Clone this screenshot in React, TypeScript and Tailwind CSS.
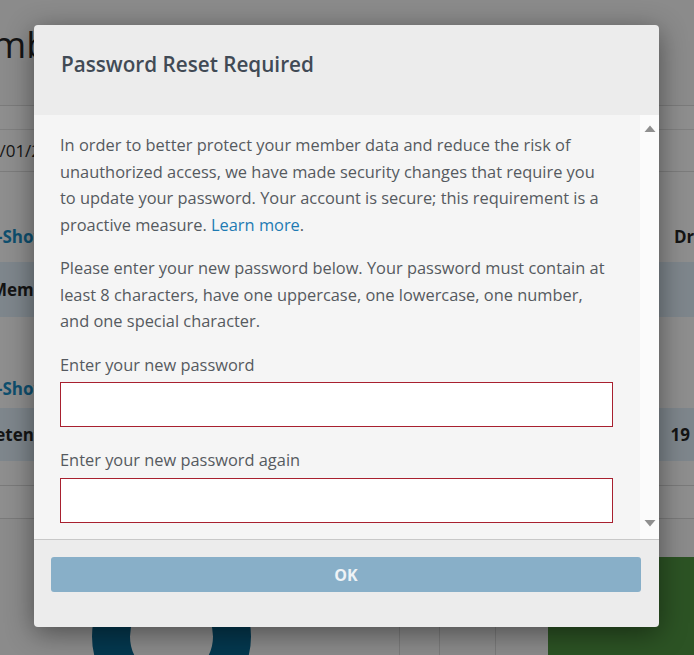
import React from "react";

const Arrow = ({ down }: { down?: boolean }) => (
  <svg width="12" height="8" viewBox="0 0 12 8" className="block">
    {down ? (
      <path d="M0.5 1 H11.5 L6 7.5 Z" fill="#8f8f8f" />
    ) : (
      <path d="M0.5 7 H11.5 L6 0.5 Z" fill="#8f8f8f" />
    )}
  </svg>
);

// the page behind the modal, already dimmed by the backdrop
function Backdrop() {
  return (
    <div className="flex flex-col h-full text-[#141414]">
      <div className="h-[105px] shrink-0 flex items-start">
        <h1 className="-ml-[62px] mt-[22px] text-[37px] leading-[44px] font-normal whitespace-nowrap">
          Membership
        </h1>
      </div>
      <div className="shrink-0 border-t border-[#7b7b7b] bg-[#8e8e8e]">
        <div className="h-[24px] border-b border-[#7f7f7f]" />
        <div className="h-[42px] border-b border-[#7c7c7c] flex items-center">
          <span className="-ml-[20px] text-[17px]">01/01/2019</span>
        </div>
        <div className="h-[46px]" />
        <div className="h-[38px] flex items-center justify-between font-bold text-[17px]">
          <span className="-ml-[3px] text-[#0e4f6e]">-Show</span>
          <span className="-mr-[30px]">Drops</span>
        </div>
        <div className="h-[6px]" />
        <div className="h-[55px] bg-[#7e868c] flex items-center font-bold text-[17px]">
          <span className="-ml-[9px]">Member</span>
        </div>
        <div className="h-[53px]" />
        <div className="h-[38px] flex items-center font-bold text-[17px]">
          <span className="-ml-[3px] text-[#0e4f6e]">-Show</span>
        </div>
        <div className="h-[53px] bg-[#7e868c] flex items-center justify-between font-bold text-[17px]">
          <span className="-ml-[16px]">Retention</span>
          <span className="mr-[4px]">19</span>
        </div>
        <div className="h-[25px] border-b border-[#7a7a7a]" />
        <div className="h-[33px] border-b border-[#7a7a7a]" />
      </div>
      <div className="flex flex-1 shrink-0 mt-[38px]">
        <div className="w-[400px] border-r border-[#7a7a7a]">
          <div className="ml-[92px] w-[159px] h-[159px] rounded-full border-[38px] border-[#04384f]" />
        </div>
        <div className="w-[40px] border-r border-[#7a7a7a]" />
        <div className="w-[56px] border-r border-[#7a7a7a]" />
        <div className="w-[52px]" />
        <div className="flex-1 bg-[#2c5324]" />
      </div>
    </div>
  );
}

export default function App() {
  return (
    <div className="relative w-[694px] h-[655px] overflow-hidden bg-[#8b8b8b] font-['Open_Sans',sans-serif]">
      <Backdrop />
      <div className="absolute left-[34px] top-[25px] w-[625px] h-[602px] rounded-[4px] bg-[#ececec] shadow-[0_6px_28px_rgba(0,0,0,0.45)] flex flex-col overflow-hidden">
        <div className="h-[90px] pt-[24px] px-[27px] shrink-0">
          <h2 className="text-[20.7px] leading-[30px] font-semibold text-[#414a55]">
            Password Reset Required
          </h2>
        </div>
        <div className="h-[425px] flex bg-[#f5f5f5] border-b border-[#c8c8c8] shrink-0">
          <div className="flex-1 overflow-hidden pl-[26px] pr-[27px] pt-[17px] text-[16.4px] leading-[26.5px] text-[#555a60] whitespace-nowrap">
            <p className="mb-[17px]">
              In order to better protect your member data and reduce the risk of
              <br />
              unauthorized access, we have made security changes that require you
              <br />
              to update your password. Your account is secure; this requirement is a
              <br />
              proactive measure. <a className="text-[#1e7bb3]">Learn more</a>.
            </p>
            <p className="mb-[17px]">
              Please enter your new password below. Your password must contain at
              <br />
              least 8 characters, have one uppercase, one lowercase, one number,
              <br />
              and one special character.
            </p>
            <label className="block mb-[4px]">Enter your new password</label>
            <input
              type="password"
              className="block w-full h-[45px] bg-white border border-[#a8202f] mb-[20px] outline-none"
            />
            <label className="block mb-[4px]">Enter your new password again</label>
            <input
              type="password"
              className="block w-full h-[45px] bg-white border border-[#a8202f] outline-none"
            />
          </div>
          <div className="w-[19px] bg-[#fbfbfb] flex flex-col items-center justify-between pt-[10px] pb-[12px]">
            <Arrow />
            <Arrow down />
          </div>
        </div>
        <div className="flex-1 px-[17px] pt-[17px] pr-[18px]">
          <button className="w-full h-[35px] rounded-[3px] bg-[#88afc8] text-[#eef3f6] font-bold text-[16px]">
            OK
          </button>
        </div>
      </div>
    </div>
  );
}
